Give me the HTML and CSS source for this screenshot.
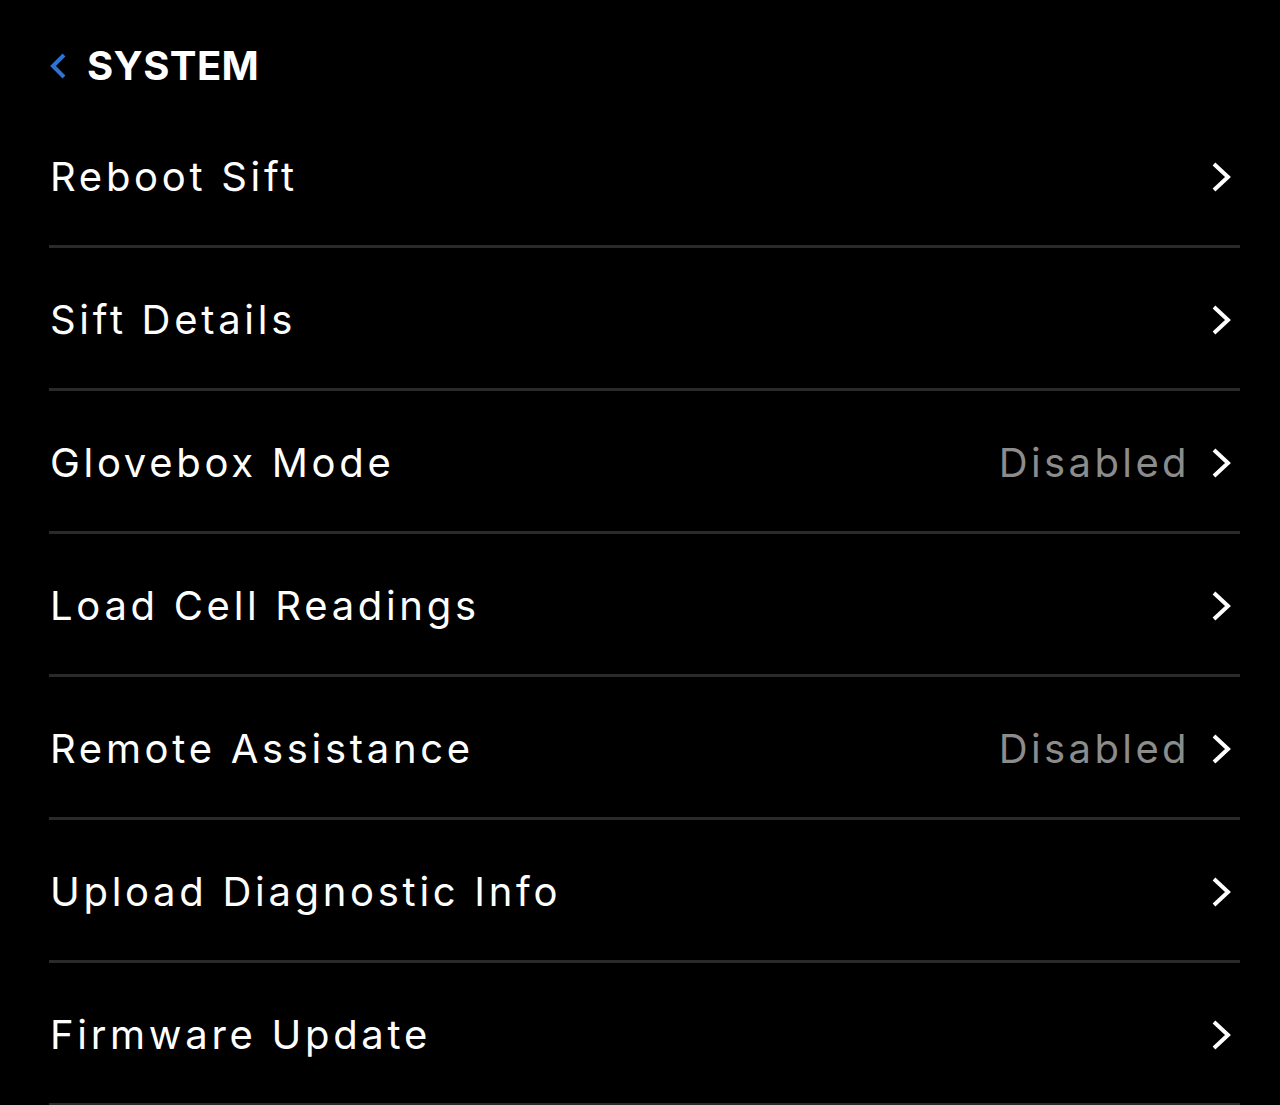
FILE: index.html
```html
<!DOCTYPE html>
<html lang="en">
<head>
<meta charset="utf-8">
<title>System</title>
<link rel="stylesheet" href="styles.css">
</head>
<body>
<div class="page">
  <header class="header">
    <svg class="back" viewBox="0 0 18 26"><path d="M15 2 L4 13 L15 24" fill="none" stroke="#2f72d6" stroke-width="4"/></svg>
    <h1 class="title">SYSTEM</h1>
  </header>
  <ul class="list">
    <li class="row"><span class="label">Reboot Sift</span><span class="right"><svg class="chev" viewBox="0 0 24 30"><path d="M5 2 L19 15 L5 28" fill="none" stroke="#fff" stroke-width="4"/></svg></span></li>
    <li class="row"><span class="label">Sift Details</span><span class="right"><svg class="chev" viewBox="0 0 24 30"><path d="M5 2 L19 15 L5 28" fill="none" stroke="#fff" stroke-width="4"/></svg></span></li>
    <li class="row"><span class="label">Glovebox Mode</span><span class="right"><span class="value">Disabled</span><svg class="chev" viewBox="0 0 24 30"><path d="M5 2 L19 15 L5 28" fill="none" stroke="#fff" stroke-width="4"/></svg></span></li>
    <li class="row"><span class="label">Load Cell Readings</span><span class="right"><svg class="chev" viewBox="0 0 24 30"><path d="M5 2 L19 15 L5 28" fill="none" stroke="#fff" stroke-width="4"/></svg></span></li>
    <li class="row"><span class="label">Remote Assistance</span><span class="right"><span class="value">Disabled</span><svg class="chev" viewBox="0 0 24 30"><path d="M5 2 L19 15 L5 28" fill="none" stroke="#fff" stroke-width="4"/></svg></span></li>
    <li class="row"><span class="label">Upload Diagnostic Info</span><span class="right"><svg class="chev" viewBox="0 0 24 30"><path d="M5 2 L19 15 L5 28" fill="none" stroke="#fff" stroke-width="4"/></svg></span></li>
    <li class="row"><span class="label">Firmware Update</span><span class="right"><svg class="chev" viewBox="0 0 24 30"><path d="M5 2 L19 15 L5 28" fill="none" stroke="#fff" stroke-width="4"/></svg></span></li>
  </ul>
</div>
</body>
</html>
```
FILE: styles.css
```css
html, body {
  margin: 0;
  padding: 0;
  background: #000;
  color: #fff;
  font-family: Inter, "Noto Sans", "Liberation Sans", sans-serif;
}
.page {
  padding: 0 40px 0 49px;
}
.header {
  height: 105px;
  display: flex;
  align-items: center;
  padding-top: 27px;
  box-sizing: border-box;
  gap: 20px;
}
.back {
  display: block;
  width: 18px;
  height: 26px;
  flex: none;
}
.title {
  margin: 0;
  font-size: 40px;
  font-weight: 700;
  letter-spacing: 0.4px;
  line-height: 1;
}
.list {
  list-style: none;
  margin: 0;
  padding: 0;
}
.row {
  display: flex;
  align-items: center;
  justify-content: space-between;
  border-bottom: 3px solid #2a2a2a;
  padding-top: 3px;
  box-sizing: border-box;
  height: 143px;
}
.label {
  font-size: 40px;
  letter-spacing: 3.7px;
  line-height: 1;
  margin-left: 1px;
}
.right {
  display: flex;
  align-items: center;
  gap: 19px;
  padding-right: 7px;
}
.value {
  font-size: 40px;
  letter-spacing: 3.4px;
  color: #8c8c8c;
  line-height: 1;
}
.chev {
  display: block;
  width: 24px;
  height: 30px;
}
```
